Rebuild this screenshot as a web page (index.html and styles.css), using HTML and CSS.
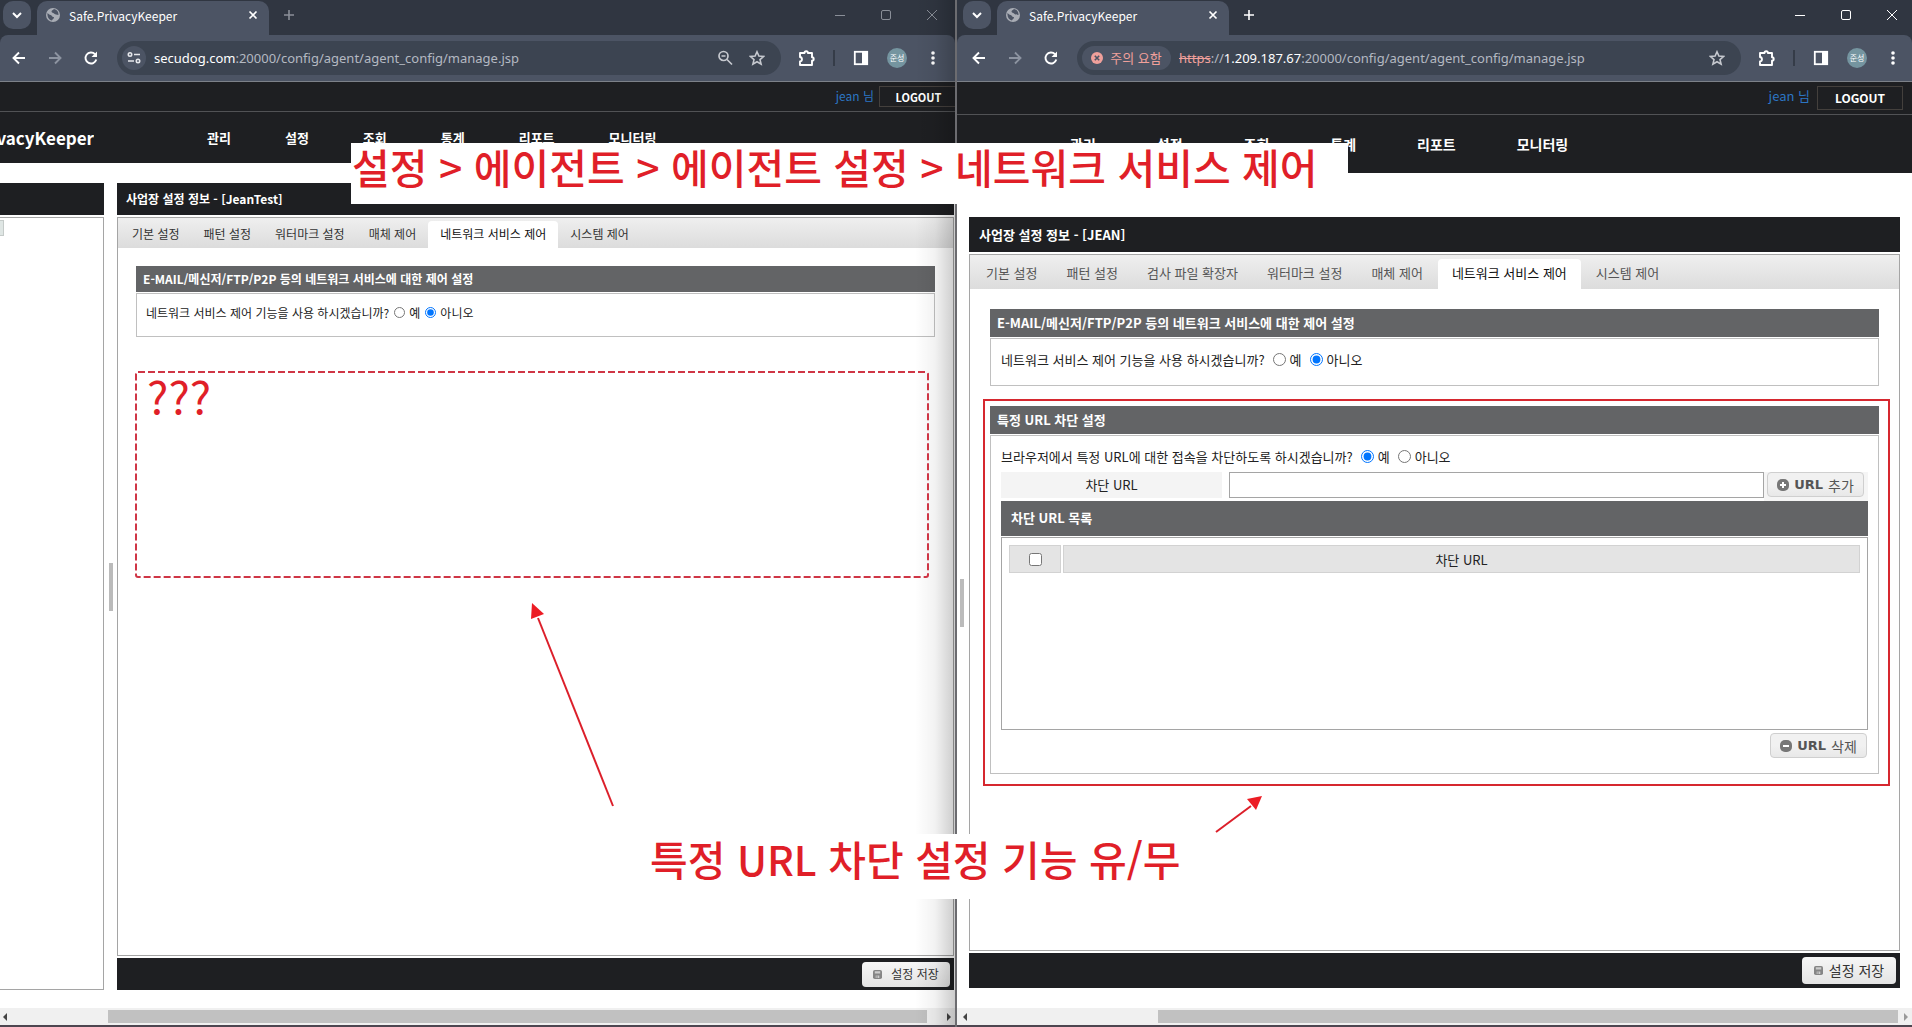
FILE: index.html
```html
<!DOCTYPE html>
<html lang="ko">
<head>
<meta charset="utf-8">
<title>Safe.PrivacyKeeper</title>
<link rel="stylesheet" href="styles.css">
</head>
<body>
<svg class="defs" aria-hidden="true">
  <symbol id="i-chev" viewBox="0 0 28 28"><path d="M10 12l4 4 4-4" fill="none" stroke="#fff" stroke-width="2"/></symbol>
  <symbol id="i-globe" viewBox="0 0 16 16"><circle cx="8" cy="8" r="7" fill="#a9adb5"/><path d="M2.500 6c1.500 2 3 1.500 4 2.500s1 1.500 2.500 1.500c0 2-1.500 2-2 3.500-3-.5-5-3.500-4.500-7.500zM9 2c-1 1.500-2.500 1-2.500 2.500s2 1 2.500 2 3 1 4.500 1.500c.2-3-1.500-5.500-4.500-6z" fill="#4c5464"/></symbol>
  <symbol id="i-x" viewBox="0 0 12 12"><path d="M2.500 2.500l7 7M9.500 2.500l-7 7" fill="none" stroke="currentColor" stroke-width="1.700"/></symbol>
  <symbol id="i-plus" viewBox="0 0 12 12"><path d="M6 1v10M1 6h10" fill="none" stroke="currentColor" stroke-width="1.600"/></symbol>
  <symbol id="i-min" viewBox="0 0 12 12"><path d="M1 6.500h10" stroke="currentColor"/></symbol>
  <symbol id="i-max" viewBox="0 0 12 12"><rect x="1.500" y="1.500" width="9" height="9" rx="1.500" fill="none" stroke="currentColor"/></symbol>
  <symbol id="i-close" viewBox="0 0 12 12"><path d="M1 1l10 10M11 1L1 11" stroke="currentColor"/></symbol>
  <symbol id="i-back" viewBox="0 0 16 16"><path d="M14 8H3M8 2.500L2.500 8 8 13.500" fill="none" stroke="currentColor" stroke-width="1.900"/></symbol>
  <symbol id="i-fwd" viewBox="0 0 16 16"><path d="M2 8h11M8 2.500L13.500 8 8 13.500" fill="none" stroke="currentColor" stroke-width="1.900"/></symbol>
  <symbol id="i-reload" viewBox="0 0 16 16"><path d="M13.300 9.500A5.500 5.500 0 1 1 12 4.200" fill="none" stroke="#fff" stroke-width="1.900"/><path d="M14 1.500V7H8.500z" fill="#fff"/></symbol>
  <symbol id="i-tune" viewBox="0 0 16 16"><g fill="none" stroke="#e6e8ec" stroke-width="1.600"><circle cx="4" cy="4.500" r="1.700"/><path d="M8 4.500h6M2 11h6"/><circle cx="12" cy="11" r="1.700"/></g></symbol>
  <symbol id="i-zoom" viewBox="0 0 16 16"><g fill="none" stroke="#c6c9cf" stroke-width="1.700"><circle cx="6.500" cy="6" r="4.500"/><path d="M10 9.500l5 5M4.500 6h4"/></g></symbol>
  <symbol id="i-star" viewBox="0 0 16 16"><path d="M8 1.800l1.900 4.300 4.600.4-3.500 3.100 1.100 4.600L8 11.800l-4.100 2.400L5 9.600 1.500 6.500l4.600-.4z" fill="none" stroke="#c6c9cf" stroke-width="1.600"/></symbol>
  <symbol id="i-ext" viewBox="0 0 18 18"><path d="M2 4h4.500a1.700 1.700 0 0 1 3.400 0H14v4.200a1.700 1.700 0 0 1 0 3.400V16H2v-3.500c2.600-.3 2.600-4.200 0-4.500z" fill="none" stroke="#fff" stroke-width="1.900" stroke-linejoin="round"/></symbol>
  <symbol id="i-side" viewBox="0 0 16 16"><rect x="1.800" y="1.800" width="12.400" height="12.400" fill="none" stroke="#fff" stroke-width="1.800"/><path d="M9 1.500h5.500v13H9z" fill="#fff"/></symbol>
  <symbol id="i-dots" viewBox="0 0 16 16"><g fill="#fff"><circle cx="8" cy="3" r="1.800"/><circle cx="8" cy="8" r="1.800"/><circle cx="8" cy="13" r="1.800"/></g></symbol>
  <symbol id="i-bad" viewBox="0 0 12 12"><circle cx="6" cy="6" r="6" fill="#f0a09b"/><path d="M3.800 3.800l4.400 4.400M8.200 3.800L3.800 8.200" stroke="#4c5464" stroke-width="1.600"/></symbol>
  <symbol id="i-save" viewBox="0 0 10 10"><rect width="10" height="10" rx="2" fill="#858585"/><path d="M2 1.500h6V4H2zM3 6h4v3H3z" fill="#ccc"/><path d="M4.500 6v3" stroke="#858585"/></symbol>
  <symbol id="i-add" viewBox="0 0 12 12"><rect width="12" height="12" rx="5" fill="#777"/><path d="M6 3v6M3 6h6" stroke="#fff" stroke-width="2"/></symbol>
  <symbol id="i-del" viewBox="0 0 12 12"><rect width="12" height="12" rx="5" fill="#777"/><path d="M3 6h6" stroke="#fff" stroke-width="2"/></symbol>
</svg>

<div class="desktop">
  <section class="window window-a">
    <header class="chrome">
      <div class="tabstrip">
        <button class="tab-search" aria-label="탭 검색"><svg width="28" height="28"><use href="#i-chev"/></svg></button>
        <div class="browser-tab"><svg width="16" height="16"><use href="#i-globe"/></svg><span class="tab-title">Safe.PrivacyKeeper</span><svg width="12" height="12"><use href="#i-x"/></svg></div>
        <button class="tab-new" aria-label="새 탭"><svg width="12" height="12"><use href="#i-plus"/></svg></button>
        <div class="controls"><svg width="12" height="12"><use href="#i-min"/></svg><svg width="12" height="12"><use href="#i-max"/></svg><svg width="12" height="12"><use href="#i-close"/></svg></div>
      </div>
      <div class="toolbar">
        <div class="history"><svg width="16" height="16"><use href="#i-back"/></svg><svg class="dim" width="16" height="16"><use href="#i-fwd"/></svg><svg width="16" height="16"><use href="#i-reload"/></svg></div>
        <div class="omnibox">
          <span class="site-info"><svg width="16" height="16"><use href="#i-tune"/></svg></span>
          <span class="url"><b>secudog.com</b>:20000/config/agent/agent_config/manage.jsp</span>
          <svg width="16" height="16"><use href="#i-zoom"/></svg>
          <svg width="16" height="16"><use href="#i-star"/></svg>
        </div>
        <div class="actions"><svg width="18" height="18"><use href="#i-ext"/></svg><i class="divider"></i><svg width="16" height="16"><use href="#i-side"/></svg><span class="avatar">준성</span><svg width="16" height="16"><use href="#i-dots"/></svg></div>
      </div>
    </header>
    <div class="userbar"><span class="user">jean 님</span><button class="logout">LOGOUT</button></div>
    <nav class="menu">
      <div class="brand"><span>Safe.PrivacyKeeper</span></div>
      <a href="#">관리</a><a href="#">설정</a><a href="#">조회</a><a href="#">통계</a><a href="#">리포트</a><a href="#">모니터링</a>
    </nav>
    <div class="work">
      <aside class="tree"><div class="bar"></div><div class="tree-body"><span class="node"></span></div></aside>
      <div class="splitter"><i></i></div>
      <main class="main">
        <h1 class="bar">사업장 설정 정보 - [JeanTest]</h1>
        <div class="panel">
          <div class="tabs"><a href="#">기본 설정</a><a href="#">패턴 설정</a><a href="#">워터마크 설정</a><a href="#">매체 제어</a><a href="#" class="on">네트워크 서비스 제어</a><a href="#">시스템 제어</a></div>
          <div class="groups">
            <section class="group">
              <h2>E-MAIL/메신저/FTP/P2P 등의 네트워크 서비스에 대한 제어 설정</h2>
              <div class="group-body">
                <div class="question"><span>네트워크 서비스 제어 기능을 사용 하시겠습니까?</span><label><input type="radio" name="netA">예</label><label><input type="radio" name="netA" checked>아니오</label></div>
              </div>
            </section>
          </div>
        </div>
        <div class="bar foot"><button class="save"><svg width="9" height="9"><use href="#i-save"/></svg>설정 저장</button></div>
      </main>
    </div>
    <div class="scroll"><i class="arrow left"></i><span class="track"><span class="thumb"></span></span><i class="arrow right"></i></div>
  </section>

  <section class="window window-b">
    <header class="chrome">
      <div class="tabstrip">
        <button class="tab-search" aria-label="탭 검색"><svg width="28" height="28"><use href="#i-chev"/></svg></button>
        <div class="browser-tab"><svg width="16" height="16"><use href="#i-globe"/></svg><span class="tab-title">Safe.PrivacyKeeper</span><svg width="12" height="12"><use href="#i-x"/></svg></div>
        <button class="tab-new" aria-label="새 탭"><svg width="12" height="12"><use href="#i-plus"/></svg></button>
        <div class="controls"><svg width="12" height="12"><use href="#i-min"/></svg><svg width="12" height="12"><use href="#i-max"/></svg><svg width="12" height="12"><use href="#i-close"/></svg></div>
      </div>
      <div class="toolbar">
        <div class="history"><svg width="16" height="16"><use href="#i-back"/></svg><svg class="dim" width="16" height="16"><use href="#i-fwd"/></svg><svg width="16" height="16"><use href="#i-reload"/></svg></div>
        <div class="omnibox">
          <span class="site-info warn"><svg width="12" height="12"><use href="#i-bad"/></svg>주의 요함</span>
          <span class="url"><s>https</s>://<b>1.209.187.67</b>:20000/config/agent/agent_config/manage.jsp</span>
          <svg width="16" height="16"><use href="#i-star"/></svg>
        </div>
        <div class="actions"><svg width="18" height="18"><use href="#i-ext"/></svg><i class="divider"></i><svg width="16" height="16"><use href="#i-side"/></svg><span class="avatar">준성</span><svg width="16" height="16"><use href="#i-dots"/></svg></div>
      </div>
    </header>
    <div class="userbar"><span class="user">jean 님</span><button class="logout">LOGOUT</button></div>
    <nav class="menu">
      <a href="#">관리</a><a href="#">설정</a><a href="#">조회</a><a href="#">통계</a><a href="#">리포트</a><a href="#">모니터링</a>
    </nav>
    <div class="work">
      <div class="splitter"><i></i></div>
      <main class="main">
        <h1 class="bar">사업장 설정 정보 - [JEAN]</h1>
        <div class="panel">
          <div class="tabs"><a href="#">기본 설정</a><a href="#">패턴 설정</a><a href="#">검사 파일 확장자</a><a href="#">워터마크 설정</a><a href="#">매체 제어</a><a href="#" class="on">네트워크 서비스 제어</a><a href="#">시스템 제어</a></div>
          <div class="groups">
            <section class="group">
              <h2>E-MAIL/메신저/FTP/P2P 등의 네트워크 서비스에 대한 제어 설정</h2>
              <div class="group-body">
                <div class="question"><span>네트워크 서비스 제어 기능을 사용 하시겠습니까?</span><label><input type="radio" name="netB">예</label><label><input type="radio" name="netB" checked>아니오</label></div>
              </div>
            </section>
            <section class="group marked">
              <h2>특정 URL 차단 설정</h2>
              <div class="group-body tall">
                <div class="question"><span>브라우저에서 특정 URL에 대한 접속을 차단하도록 하시겠습니까?</span><label><input type="radio" name="urlB" checked>예</label><label><input type="radio" name="urlB">아니오</label></div>
                <div class="url-row">
                  <label for="block-url">차단 URL</label>
                  <input type="text" id="block-url">
                  <button class="small"><svg width="12" height="12"><use href="#i-add"/></svg><b>URL</b> 추가</button>
                </div>
                <h3>차단 URL 목록</h3>
                <div class="list">
                  <table>
                    <thead><tr><th class="check"><input type="checkbox" aria-label="전체 선택"></th><th>차단 URL</th></tr></thead>
                  </table>
                </div>
                <div class="list-foot"><button class="small"><svg width="12" height="12"><use href="#i-del"/></svg><b>URL</b> 삭제</button></div>
              </div>
            </section>
          </div>
        </div>
        <div class="bar foot"><button class="save"><svg width="9" height="9"><use href="#i-save"/></svg>설정 저장</button></div>
      </main>
    </div>
    <div class="scroll"><i class="arrow left"></i><span class="track"><span class="thumb"></span></span><i class="arrow right"></i></div>
  </section>

  <div class="note note-path">설정 &gt; 에이전트 &gt; 에이전트 설정 &gt; 네트워크 서비스 제어</div>
  <div class="note note-diff">특정 URL 차단 설정 기능 유/무</div>
  <div class="note note-missing">???</div>
  <svg class="marks" aria-hidden="true">
    <rect x="136" y="372" width="792" height="205" rx="2" fill="none" stroke="#cf3545" stroke-width="2" stroke-dasharray="7 3"/>
    <g stroke="#dc1f2a" stroke-width="2" fill="#ec1c24"><path d="M613 806L538 618"/><path d="M532 603l12 11-13 5z" stroke="none"/><path d="M1216 832l35-26"/><path d="M1262 796l-15 3 9 11z" stroke="none"/></g>
  </svg>
</div>
</body>
</html>
```
FILE: styles.css
```css
* { box-sizing: border-box; }
body { margin: 0; font-family: "Noto Sans CJK KR", sans-serif; color: #222; background: #fff; }
button { font: inherit; padding: 0; border: 0; background: none; color: inherit; }
a { color: inherit; text-decoration: none; }
h1, h2, h3 { margin: 0; font-size: inherit; }
svg { flex: none; }
.defs { display: none; }

.desktop { position: relative; display: flex; gap: 2px; min-height: 100vh; background: #6c6c70; overflow: hidden; }
.window { position: relative; flex: 1 1 0; min-width: 0; display: flex; flex-direction: column; background: #fff; border-bottom: 2px solid #4d4650; font-size: var(--fs); white-space: nowrap; }

.window-a {
  --fs: 12px; --menu-fs: 13px; --menu-gap: 54px; --save-fs: 12px; --logout-fs: 11px;
  --user-h: 30px; --menu-h: 51px; --logout-h: 21px; --logout-w: 76px;
  --bar-h: 32px; --tabs-h: 30px; --tab-pad: 12px; --tab-top: 3px; --tab-gap: 0;
  --group-pad: 18px; --title-h: 26px; --body-h: 44px; --radio: 11px; --radio-gap: 5px;
}
.window-b {
  --fs: 13px; --menu-fs: 14px; --menu-gap: 61px; --save-fs: 14px; --logout-fs: 12px;
  --user-h: 33px; --menu-h: 58px; --logout-h: 24px; --logout-w: 86px;
  --bar-h: 35px; --tabs-h: 34px; --tab-pad: 14px; --tab-top: 4px; --tab-gap: 1px;
  --group-pad: 20px; --title-h: 28px; --body-h: 48px; --radio: 13px; --radio-gap: 8px;
}
/* shadow that the front window throws on the one behind it */
.window-a::after { content: ""; position: absolute; top: 0; right: 0; bottom: 0; width: 40px; background: linear-gradient(to right, rgba(0,0,0,0), rgba(0,0,0,.05) 50%, rgba(0,0,0,.2)); pointer-events: none; }

/* browser chrome */
.chrome { background: #303641; border-bottom: 1px solid #7d8189; }
.tabstrip { display: flex; height: 35px; padding-left: 3px; color: #fff; }
.tab-search { width: 28px; height: 28px; margin: 1px 6px 0 0; border-radius: 10px; background: #4c5464; }
.tab-search svg { display: block; }
.browser-tab { width: 232px; margin-top: 1px; padding: 0 10px 6px 8px; display: flex; align-items: center; gap: 8px; border-radius: 10px 10px 0 0; background: #4c5464; font-size: 12px; }
.tab-title { flex: 1; }
.tab-new { width: 40px; height: 29px; display: grid; place-items: center; }
.controls { margin-left: auto; display: flex; align-items: center; gap: 34px; height: 29px; padding-right: 14px; }
.window-a .chrome { padding-right: 3px; }
.window-b .chrome { padding-left: 3px; }
.window-a .toolbar { margin-right: -3px; padding-right: 14px; }
.window-b .toolbar { margin-left: -3px; padding-left: 14px; }
.window-a .tab-new, .window-a .controls { color: #8a8f98; }
.toolbar { height: 46px; padding: 0 11px; display: flex; align-items: center; background: #4c5464; border-radius: 8px 8px 0 0; color: #fff; }
.history { display: flex; gap: 20px; width: 106px; }
.dim { color: #8d94a1; }
.omnibox { flex: 1; min-width: 0; height: 34px; padding: 0 16px 0 5px; display: flex; align-items: center; gap: 16px; border-radius: 17px; background: #3c4451; }
.site-info { display: flex; align-items: center; justify-content: center; flex: none; width: 24px; height: 24px; border-radius: 12px; background: #4c5464; }
.site-info.warn { width: 89px; gap: 7px; color: #f0a09b; font-size: 13px; line-height: 22px; }
.url { flex: 1; min-width: 0; margin-left: -8px; overflow: hidden; color: #b4b9c2; font: 13px/20px "Noto Sans", sans-serif; }
.url b { color: #fff; font-weight: 400; }
.url s { color: #f0a09b; }
.actions { margin-left: 17px; display: flex; align-items: center; }
.divider { width: 2px; height: 16px; margin: 0 18px 0 17px; background: #353c48; }
.avatar { width: 20px; height: 20px; margin: 0 18px; border-radius: 50%; background: #7595a0; font-size: 8px; line-height: 20px; text-align: center; }

/* site header */
.userbar { height: var(--user-h); display: flex; justify-content: flex-end; align-items: flex-start; gap: 5px; padding-top: 4px; background: #1e1f22; border-bottom: 1px solid #515255; }
.window-b .userbar { padding-right: 9px; gap: 7px; }
.user { color: #2c76c4; line-height: 20px; }
.logout { width: var(--logout-w); height: var(--logout-h); border: 1px solid #44403d; color: #fff; font-size: var(--logout-fs); line-height: 18px; font-weight: 700; }
.window-a .logout { border-right: 0; padding-left: 2px; }
.menu { height: var(--menu-h); display: flex; align-items: center; gap: var(--menu-gap); background: #1e1f22; color: #fff; font-size: var(--menu-fs); font-weight: 700; }
.window-b .menu { padding-left: 113px; }
.brand { width: 94px; margin-right: 59px; display: flex; justify-content: flex-end; overflow: hidden; font-size: 17px; }

/* work area */
.work { flex: 1; display: flex; padding: 20px 0 18px; }
.window-b .work { padding: 44px 12px 20px 0; }
.bar { height: var(--bar-h); flex: none; padding-left: 9px; background: #1e1f22; color: #fff; font-weight: 700; line-height: var(--bar-h); }
.window-b .bar { padding-left: 10px; }
.tree { width: 104px; display: flex; flex-direction: column; gap: 2px; }
.tree-body { flex: 1; border: 1px solid #a5a5a5; border-left: 0; }
.node { display: block; width: 4px; height: 16px; margin-top: 2px; background: #dfe6e4; border: 1px solid #c5cbc9; border-left: 0; }
.splitter { width: 13px; display: flex; align-items: center; justify-content: center; }
.window-b .splitter { width: 12px; justify-content: flex-start; padding-left: 3px; }
.splitter i { width: 4px; height: 48px; background: #bbb; }
.main { flex: 1; min-width: 0; display: flex; flex-direction: column; gap: 2px; }
.window-a .main { margin-right: 1px; }
.panel { flex: 1; border: 1px solid #a5a5a5; }
.tabs { height: var(--tabs-h); display: flex; gap: var(--tab-gap); padding: var(--tab-top) 0 0 2px; background: linear-gradient(#efefef, #dcdcdc); color: #333; line-height: 26px; }
.window-b .tabs { color: #555; line-height: 28px; }
.tabs a { padding: 0 var(--tab-pad); }
.tabs .on { background: #fff; color: #111; border-radius: 4px 4px 0 0; }
.groups { display: flex; flex-direction: column; gap: 20px; padding: var(--group-pad) var(--group-pad) 0; }
.group { position: relative; display: flex; flex-direction: column; gap: 1px; }
.group h2 { height: var(--title-h); padding-left: 7px; background: #636466; color: #fff; line-height: var(--title-h); }
.group-body { min-height: var(--body-h); padding: 10px; border: 1px solid #c0c0c0; }
.window-a .group-body { padding: 9px; }
.question { display: flex; align-items: center; height: 18px; }
.window-b .question { height: 20px; }
.question label { display: flex; align-items: center; gap: 4px; margin-left: var(--radio-gap); }
.question input { width: var(--radio); height: var(--radio); margin: 0; accent-color: #0075ff; }
/* red frame drawn round the feature under discussion */
.marked::after { content: ""; position: absolute; inset: -7px -11px -12px -7px; border: 2px solid #d6282f; pointer-events: none; }
.group-body.tall { padding-bottom: 15px; }
.url-row { display: flex; gap: 3px; margin-top: 6px; height: 29px; padding: 0 4px 3px 0; background: linear-gradient(#f5f5f5, #f5f5f5) right / 104px 100% no-repeat; }
.url-row label { width: 221px; margin-right: 4px; background: #f4f4f4; text-align: center; line-height: 26px; }
.url-row input { flex: 1; min-width: 0; border: 1px solid #a5a5a5; background: #fff; font: inherit; }
.small { width: 97px; height: 25px; display: flex; align-items: center; justify-content: center; border: 1px solid #cfcfcf; border-radius: 4px; background: linear-gradient(#f1f1f1 50%, #e8e8e8); color: #555; font: 14px "DejaVu Sans", "Noto Sans CJK KR", sans-serif; }
.small svg { margin-right: 5px; }
.small b { margin-right: 5px; font-size: 13px; }
h3 { height: 35px; margin-bottom: 1px; padding-left: 10px; background: #636466; color: #fff; line-height: 34px; }
.list { height: 193px; padding: 5px; border: 1px solid #a5a5a5; }
.list table { width: 100%; border-spacing: 2px; }
.list th { height: 28px; padding: 0; border: 1px solid #d2d2d2; background: #e4e4e4; font-weight: 400; }
.list .check { width: 52px; }
.list input { display: block; width: 13px; height: 13px; margin: 0 auto; }
.list-foot { display: flex; justify-content: flex-end; padding: 3px 1px 0 0; }
.foot { display: flex; align-items: center; justify-content: flex-end; padding-right: 4px; }
.save { width: 88px; height: 25px; display: flex; align-items: center; justify-content: center; gap: 9px; border-radius: 4px; background: linear-gradient(#f6f6f6, #e4e4e4); color: #333; font-size: var(--save-fs); font-weight: 400; }
.window-b .save { width: 94px; height: 27px; gap: 6px; }

/* horizontal scroll bar */
.scroll { height: 17px; display: flex; align-items: center; justify-content: space-between; padding: 0 4px 0 3px; background: #f0f0f0; }
.window-b .scroll { padding-left: 6px; }
.arrow { border: 4px solid transparent; flex: none; }
.arrow.left { border-left: 0; border-right-color: #444; }
.arrow.right { border-right: 0; border-left-color: #444; }
.track { flex: 1; height: 13px; margin: 0 10px; padding-right: 10px; display: flex; justify-content: flex-end; }
.thumb { width: 90%; background: #c1c1c1; }
.window-b .track { margin: 0 6px; padding: 0; }
.window-b .thumb { width: 80%; }
.window-b .arrow.right { border-left-color: #999; }

/* annotations laid over both windows */
.note { position: absolute; color: #e01f28; font-size: 41px; line-height: 60px; font-weight: 500; white-space: nowrap; }
.note-path { left: 351px; top: 143px; width: 997px; height: 61px; padding-left: 1px; line-height: 47px; background: #fff; }
.note-diff { left: 640px; top: 834px; width: 546px; height: 65px; padding-left: 10px; line-height: 48px; background: #fff; }
.note-missing { left: 147px; top: 366px; font-size: 45px; font-weight: 400; }
.marks { position: absolute; left: 0; top: 0; width: 100%; height: 100%; pointer-events: none; }
```
